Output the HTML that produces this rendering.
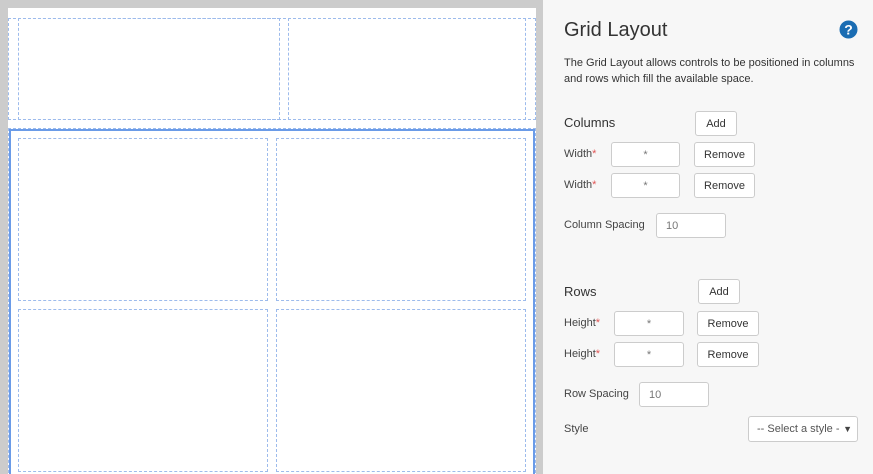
<!DOCTYPE html>
<html><head><meta charset="utf-8"><style>
*{box-sizing:border-box;margin:0;padding:0}
html,body{width:873px;height:474px;overflow:hidden}
body{background:#f7f7f7;font-family:"Liberation Sans",sans-serif;color:#333}
#w{position:relative;width:873px;height:474px;overflow:hidden}
.a{position:absolute}
.d{position:absolute;border:1px dashed #9dbbec}
.lbl{position:absolute;font-size:11px;color:#444}
.req{color:#e05555}
.inp{position:absolute;background:#fff;border:1px solid #ccc;border-radius:3px;font-size:11px;color:#777;display:flex;align-items:center}
.btn{position:absolute;background:#fff;border:1px solid #ccc;border-radius:3px;font-size:11px;color:#333;display:flex;align-items:center;justify-content:center}
</style></head><body><div id="w">
<div class="a" style="left:0;top:0;width:543px;height:474px;background:#cccccc"></div>
<div class="a" style="left:8px;top:8px;width:528px;height:466px;background:#fff"></div>
<div class="d" style="left:8px;top:18px;width:528px;height:102px"></div>
<div class="d" style="left:18px;top:18px;width:262px;height:102px"></div>
<div class="d" style="left:288px;top:18px;width:238px;height:102px"></div>
<div class="d" style="left:8px;top:128px;width:528px;height:350px"></div>
<div class="a" style="left:9px;top:129px;width:526px;height:350px;border:2px solid #6a9be8"></div>
<div class="d" style="left:18px;top:138px;width:250px;height:163px"></div>
<div class="d" style="left:276px;top:138px;width:250px;height:163px"></div>
<div class="d" style="left:18px;top:309px;width:250px;height:163px"></div>
<div class="d" style="left:276px;top:309px;width:250px;height:163px"></div>

<div class="a" style="left:564px;top:19px;font-size:20px;color:#333">Grid Layout</div>
<svg class="a" style="left:839px;top:20px" width="19" height="19" viewBox="0 0 19 19"><circle cx="9.5" cy="9.5" r="9" fill="#1b6db3"/><text x="9.5" y="14.5" text-anchor="middle" font-family="Liberation Sans" font-weight="bold" font-size="14" fill="#fff">?</text></svg>
<div class="a" style="left:564px;top:56px;font-size:11px;line-height:15.5px;color:#333;width:300px">The Grid Layout allows controls to be positioned in columns<br>and rows which fill the available space.</div>

<div class="a" style="left:564px;top:115px;font-size:13px">Columns</div>
<div class="btn" style="left:695px;top:111px;width:42px;height:25px">Add</div>
<div class="lbl" style="left:564px;top:148px">Width<span class="req">*</span></div>
<div class="inp" style="left:611px;top:142px;width:69px;height:25px;justify-content:center">*</div>
<div class="btn" style="left:694px;top:142px;width:61px;height:25px">Remove</div>
<div class="lbl" style="left:564px;top:179px">Width<span class="req">*</span></div>
<div class="inp" style="left:611px;top:173px;width:69px;height:25px;justify-content:center">*</div>
<div class="btn" style="left:694px;top:173px;width:61px;height:25px">Remove</div>
<div class="lbl" style="left:564px;top:219px">Column Spacing</div>
<div class="inp" style="left:656px;top:213px;width:70px;height:25px;padding-left:9px">10</div>

<div class="a" style="left:564px;top:284px;font-size:13px">Rows</div>
<div class="btn" style="left:698px;top:279px;width:42px;height:25px">Add</div>
<div class="lbl" style="left:564px;top:317px">Height<span class="req">*</span></div>
<div class="inp" style="left:614px;top:311px;width:70px;height:25px;justify-content:center">*</div>
<div class="btn" style="left:697px;top:311px;width:62px;height:25px">Remove</div>
<div class="lbl" style="left:564px;top:348px">Height<span class="req">*</span></div>
<div class="inp" style="left:614px;top:342px;width:70px;height:25px;justify-content:center">*</div>
<div class="btn" style="left:697px;top:342px;width:62px;height:25px">Remove</div>
<div class="lbl" style="left:564px;top:388px">Row Spacing</div>
<div class="inp" style="left:639px;top:382px;width:70px;height:25px;padding-left:9px">10</div>
<div class="lbl" style="left:564px;top:423px">Style</div>
<div class="inp" style="left:748px;top:416px;width:110px;height:26px;padding-left:8px;color:#555;white-space:nowrap;overflow:hidden">-- Select a style - <span style="position:absolute;right:5px;font-size:9px;color:#444">▼</span></div>
</div></body></html>
